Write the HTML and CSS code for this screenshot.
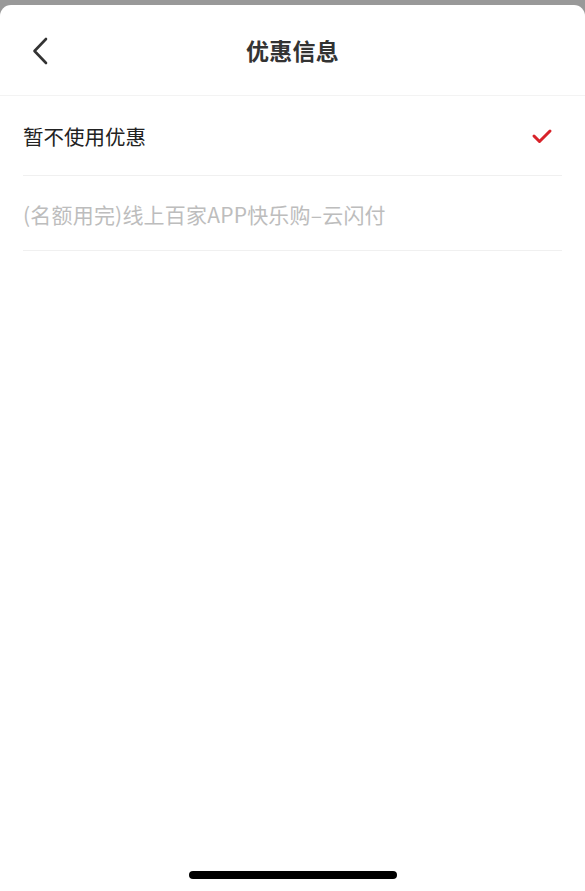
FILE: index.html
```html
<!DOCTYPE html>
<html lang="zh-CN">
<head>
<meta charset="utf-8">
<title>优惠信息</title>
<link rel="stylesheet" href="styles.css">
</head>
<body>
<div class="sheet">
  <header class="header">
    <span class="back">
      <svg width="20" height="30" viewBox="0 0 20 30"><path d="M16 3 L4.5 15 L16 27" fill="none" stroke="#333" stroke-width="2.6" stroke-linecap="round" stroke-linejoin="round"/></svg>
    </span>
    <h1 class="title">优惠信息</h1>
  </header>
  <ul class="list">
    <li class="row row-first">
      <span class="label">暂不使用优惠</span>
      <svg class="check" width="22" height="18" viewBox="0 0 22 18"><path d="M3 9 L8.5 14.5 L19 4" fill="none" stroke="#d8232a" stroke-width="3" stroke-linecap="round" stroke-linejoin="round"/></svg>
    </li>
    <li class="row row-disabled">
      <span class="label">(名额用完)线上百家APP快乐购–云闪付</span>
    </li>
  </ul>
</div>
<div class="home-indicator"></div>
</body>
</html>
```
FILE: styles.css
```css
html, body {
  margin: 0;
  padding: 0;
  height: 100%;
}
body {
  background: #999999;
  font-family: "Noto Sans CJK SC", "Noto Sans", sans-serif;
  overflow: hidden;
}
.sheet {
  margin-top: 5px;
  background: #ffffff;
  border-radius: 11px 11px 0 0;
  height: calc(100% - 5px);
}
.header {
  height: 90px;
  border-bottom: 1px solid #f3f3f3;
  display: flex;
  align-items: center;
  justify-content: center;
  position: relative;
}
.back {
  position: absolute;
  left: 30px;
  top: 31px;
  display: flex;
}
.title {
  margin: 0;
  font-size: 23px;
  font-weight: 700;
  color: #333333;
  letter-spacing: 0.3px;
}
.list {
  list-style: none;
  margin: 0;
  padding: 0 23px;
}
.row {
  display: flex;
  align-items: center;
  justify-content: space-between;
  border-bottom: 1px solid #f0f0f0;
}
.row-first {
  height: 79px;
}
.row-disabled {
  height: 75px;
  padding-top: 2px;
  box-sizing: border-box;
}
.label {
  font-size: 20.5px;
  color: #222222;
}
.row-disabled .label {
  color: #bdbdbd;
  font-size: 21px;
  letter-spacing: 0.2px;
}
.check {
  margin-right: 9px;
}
.home-indicator {
  position: absolute;
  left: 189px;
  bottom: 12px;
  width: 208px;
  height: 8px;
  border-radius: 4px;
  background: #000000;
}
```
